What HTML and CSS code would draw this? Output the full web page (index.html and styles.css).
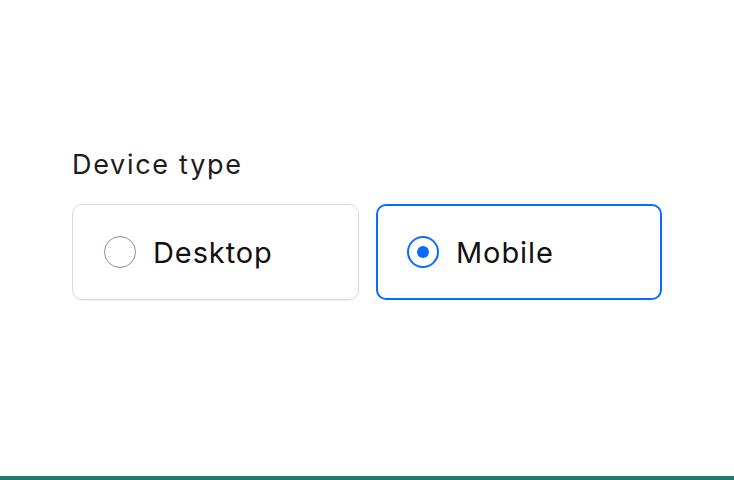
FILE: index.html
```html
<!DOCTYPE html>
<html>
<head>
<meta charset="utf-8">
<link rel="stylesheet" href="styles.css">
</head>
<body>
<main class="page">
  <fieldset class="field">
    <legend class="label">Device type</legend>
    <div class="options">
      <label class="option">
        <span class="radio"></span>
        <span class="text">Desktop</span>
      </label>
      <label class="option option--checked">
        <span class="radio radio--checked"><span class="dot"></span></span>
        <span class="text">Mobile</span>
      </label>
    </div>
  </fieldset>
</main>
<div class="bottom-bar"></div>
</body>
</html>
```
FILE: styles.css
```css
html, body {
  margin: 0;
  padding: 0;
  background: #ffffff;
}
body {
  width: 734px;
  height: 480px;
  display: flex;
  flex-direction: column;
  font-family: Inter, "Noto Sans", sans-serif;
  color: #161616;
}
.page {
  flex: 1;
  padding: 147px 72px 0 72px;
}
.field {
  border: 0;
  margin: 0;
  padding: 0;
  min-width: 0;
}
.label {
  padding: 0;
  font-size: 27px;
  letter-spacing: 1.7px;
  line-height: 36px;
  margin-bottom: 21px;
  float: left;
  width: 100%;
  color: #1c1c1c;
}
.options {
  clear: both;
  display: grid;
  grid-template-columns: 287px 286px;
  gap: 17px;
}
.option {
  box-sizing: border-box;
  height: 96px;
  border: 1px solid #d9d9e5;
  border-radius: 10px;
  box-shadow: 0 1px 2px rgba(20, 20, 60, 0.06);
  display: flex;
  align-items: center;
  padding-left: 31px;
  gap: 17px;
}
.option--checked {
  border: 2px solid #0a6cff;
  padding-left: 29px;
  box-shadow: none;
}
.radio {
  box-sizing: border-box;
  width: 32px;
  height: 32px;
  border-radius: 50%;
  border: 1px solid #8b8bab;
  display: flex;
  align-items: center;
  justify-content: center;
  flex: none;
}
.radio--checked {
  border: 2px solid #0a6cff;
}
.dot {
  width: 12px;
  height: 12px;
  border-radius: 50%;
  background: #0a6cff;
}
.text {
  font-size: 29px;
  letter-spacing: 0.9px;
  line-height: 36px;
  color: #111111;
  padding-top: 2px;
}
.bottom-bar {
  height: 4px;
  background: #217a70;
  flex: none;
}
```
